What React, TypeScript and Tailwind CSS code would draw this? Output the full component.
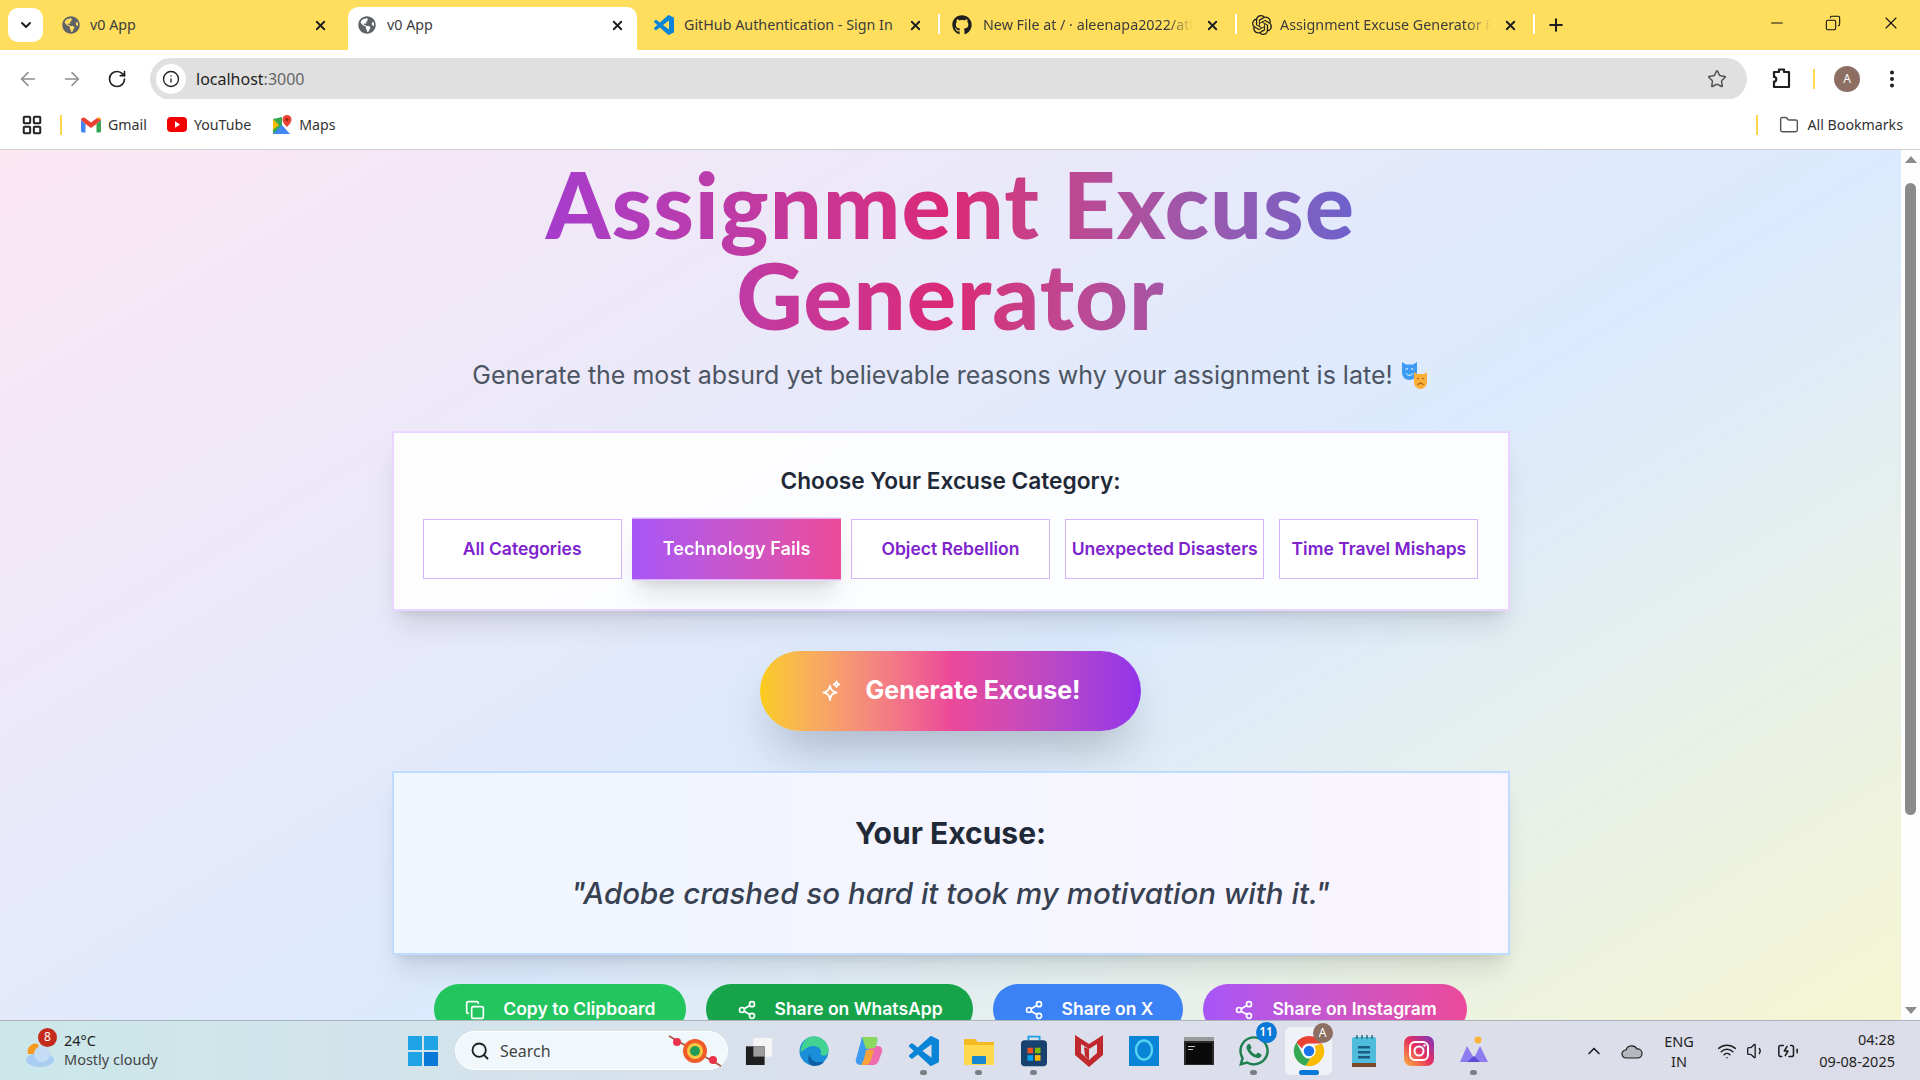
import { ReactNode } from 'react';
import clsx from 'clsx';
import {
  ArrowLeft,
  ArrowRight,
  BatteryCharging,
  ChevronDown,
  ChevronUp,
  Copy,
  EllipsisVertical,
  Folder,
  Info,
  LayoutGrid,
  Minus,
  Plus,
  RotateCw,
  Search,
  Share2,
  Star,
  Volume1,
  Wifi,
  X,
} from 'lucide-react';
import { FaGithub, FaGlobeAmericas, FaWhatsapp } from 'react-icons/fa';
import { SiOpenai } from 'react-icons/si';

const VSCODE_PATH =
  'M23.15 2.587L18.21.21a1.494 1.494 0 0 0-1.705.29l-9.46 8.63-4.12-3.128a.999.999 0 0 0-1.276.057L.327 7.261A1 1 0 0 0 .326 8.74L3.899 12 .326 15.26a1 1 0 0 0 .001 1.479L1.65 17.94a.999.999 0 0 0 1.276.057l4.12-3.128 9.46 8.63a1.492 1.492 0 0 0 1.704.29l4.942-2.377A1.5 1.5 0 0 0 24 20.06V3.939a1.5 1.5 0 0 0-.85-1.352zm-5.146 14.861L10.826 12l7.178-5.448v10.896z';

function VSCodeIcon({ className }: { className: string }) {
  return (
    <svg viewBox="0 0 24 24" className={className}>
      <path d={VSCODE_PATH} fill="#0a84d6" />
    </svg>
  );
}

function GmailIcon() {
  return (
    <svg viewBox="0 0 20 16" className="w-5 h-4">
      <path d="M0 3v11a1.5 1.5 0 0 0 1.5 1.5H4.5V7z" fill="#4285f4" />
      <path d="M20 3v11a1.5 1.5 0 0 1-1.5 1.5H15.5V7z" fill="#34a853" />
      <path d="M0 3 4.5 7l5.5 4 5.5-4L20 3c0-2.5-2.500-3.200-4-2l-6 4.500L4 1C2.500-.2 0 .5 0 3z" fill="#ea4335" />
      <path d="M15.500 1.300 20 3v-.2c0-2-2.500-3-4-1.800z" fill="#fbbc04" />
    </svg>
  );
}

function YoutubeIcon() {
  return (
    <svg viewBox="0 0 20 15" className="w-5 h-[15px]">
      <rect width="20" height="15" rx="4" fill="#f40000" />
      <path d="M8 4.200 13.200 7.500 8 10.800z" fill="#fff" />
    </svg>
  );
}

function MapsIcon() {
  return (
    <svg viewBox="0 0 20 20" className="w-5 h-5">
      <path d="M1 4 10 2v16l-9 1z" fill="#34a853" />
      <path d="M1 19 10 10l8 9z" fill="#4285f4" />
      <path d="M1 4 7 10 1 15z" fill="#fbbc04" />
      <path d="M15 0a4.500 4.500 0 0 0-4.500 4.500C10.500 8 15 12 15 12s4.500-4 4.500-7.500A4.500 4.500 0 0 0 15 0z" fill="#ea4335" />
      <circle cx="15" cy="4.500" r="1.600" fill="#a61c14" />
    </svg>
  );
}

function ChromeIcon({ className }: { className: string }) {
  return (
    <svg viewBox="0 0 32 32" className={className}>
      <path d="M16 1a15 15 0 0 1 13 7.500H16a7.500 7.500 0 0 0-7 5L3.500 7.500A15 15 0 0 1 16 1z" fill="#ea4335" />
      <path d="M3.500 7.500 9.800 20a7.500 7.500 0 0 0 7.500 3.500L13 30.800A15 15 0 0 1 3.500 7.500z" fill="#34a853" />
      <path d="M29 8.500A15 15 0 0 1 13 30.800l6.500-11A7.500 7.500 0 0 0 21.500 11z" fill="#fbbc04" />
      <circle cx="16" cy="16" r="6" fill="#1a73e8" stroke="#fff" strokeWidth="1.500" />
    </svg>
  );
}

function MasksEmoji() {
  return (
    <svg viewBox="0 0 28 28" className="w-7 h-7">
      <path d="M1 1 5 3.500h7L16 1v10c0 5-3.500 8-7.500 8S1 16 1 11z" fill="#3b9bf5" />
      <path d="M4.500 8.500 7 7.500M10 7.500l2.500 1M5 12.500c2 2.500 5 2.500 7 0" stroke="#d6ecff" strokeWidth="1.200" fill="none" />
      <path d="M13 11l3 2h7l3-2v10c0 4-3 7-6.500 7S13 25 13 21z" fill="#fbb03b" />
      <path d="M16 17.500h2M21 17.500h2M16.500 24c2-2.500 4-2.500 6 0" stroke="#a8620d" strokeWidth="1.200" fill="none" />
    </svg>
  );
}

function FourPointSparkles() {
  return (
    <svg viewBox="0 0 20 24" className="w-5 h-6" fill="none" stroke="#fff" strokeWidth="1.800" strokeLinejoin="round">
      <path d="M9 7c.8 4 2.300 5.800 6.500 6.500C11.300 14.300 9.800 16 9 21c-.8-5-2.300-6.700-6.500-7.500C6.700 12.800 8.200 11 9 7z" />
      <path d="M15.500 2.500c.3 1.700 1.100 2.500 2.800 2.800-1.700.3-2.500 1.100-2.800 2.800-.3-1.700-1.100-2.500-2.800-2.800 1.700-.3 2.500-1.100 2.800-2.800z" />
    </svg>
  );
}

type TabProps = {
  icon: ReactNode;
  title: string;
  active?: boolean;
  fade?: boolean;
  divider?: boolean;
  box: string;
  textGap: string;
};

function Tab({ icon, title, active, fade, divider, box, textGap }: TabProps) {
  return (
    <div className={clsx('relative h-[43px] flex items-center pb-[7px] shrink-0', box, active && 'bg-white rounded-t-[10px]')}>
      <span className="w-5 h-5 flex items-center justify-center shrink-0">{icon}</span>
      <span
        className={clsx(
          'flex-1 overflow-hidden whitespace-nowrap text-[14.3px] text-[#3c3c3c]',
          textGap,
          fade && '[mask-image:linear-gradient(to_right,black_88%,transparent)]'
        )}
      >
        {title}
      </span>
      <X className="w-[15px] h-[15px] ml-[12px] text-[#1f1f1f] shrink-0" strokeWidth={3} />
      {divider && <span className="absolute right-0 top-[7px] w-[2px] h-[20px] bg-white" />}
    </div>
  );
}

function TabStrip() {
  const globe = <FaGlobeAmericas className="w-[18px] h-[18px] text-[#5f6368]" />;
  return (
    <div className="h-[50px] bg-[#ffde5e] flex items-end shrink-0 relative">
      <div className="w-[35px] h-[34px] mb-2 ml-[8px] bg-white rounded-[10px] flex items-center justify-center shrink-0">
        <ChevronDown className="w-4 h-4 text-[#1f1f1f]" strokeWidth={3} />
      </div>
      <Tab icon={globe} title="v0 App" box="w-[305px] pl-[18px] pr-[20px]" textGap="ml-[9px]" />
      <Tab icon={globe} title="v0 App" box="w-[289px] pl-[9px] pr-[12px]" textGap="ml-[10px]" active />
      <Tab
        icon={<VSCodeIcon className="w-5 h-5" />}
        title="GitHub Authentication - Sign In"
        box="w-[303px] pl-[17px] pr-[17px]"
        textGap="ml-[10px]"
        divider
      />
      <Tab
        icon={<FaGithub className="w-5 h-5 text-[#1f1f1f]" />}
        title="New File at / · aleenapa2022/atl"
        box="w-[297px] pl-[12px] pr-[17px]"
        textGap="ml-[11px]"
        fade
        divider
      />
      <Tab
        icon={<SiOpenai className="w-5 h-5 text-[#1f1f1f]" />}
        title="Assignment Excuse Generator P"
        box="w-[298px] pl-[15px] pr-[17px]"
        textGap="ml-[8px]"
        fade
        divider
      />
      <div className="h-[43px] flex items-center pl-[11px] pb-[7px]">
        <Plus className="w-5 h-5 text-[#1f1f1f]" strokeWidth={2.5} />
      </div>
      <div className="flex-1" />
      <div className="h-[50px] flex items-center pr-[19px] pb-1">
        <Minus className="w-[18px] h-[18px] text-[#111]" strokeWidth={1.6} />
        <Copy className="w-[16px] h-[16px] ml-[39px] text-[#111] -scale-x-100" strokeWidth={1.6} />
        <X className="w-[20px] h-[20px] ml-[40px] text-[#111]" strokeWidth={1.3} />
      </div>
    </div>
  );
}

function ExtensionIcon() {
  return (
    <svg viewBox="0 0 22 24" className="w-[22px] h-6 ml-[24px] mt-[8px]" fill="none" stroke="#1f1f1f" strokeWidth="2.200" strokeLinejoin="round">
      <path d="M3 5h5V2.500h5V5h5v15H3v-5.500c3 .8 3-5.300 0-4.500z" />
    </svg>
  );
}

function Toolbar() {
  return (
    <div className="h-[50px] bg-white flex items-center shrink-0 rounded-t-[10px] -mb-px">
      <ArrowLeft className="w-[22px] h-[22px] ml-[17px] mt-[8px] text-[#8f8f8f]" strokeWidth={1.7} />
      <ArrowRight className="w-[22px] h-[22px] ml-[22px] mt-[8px] text-[#8f8f8f]" strokeWidth={1.7} />
      <RotateCw className="w-5 h-5 ml-[24px] mt-[8px] text-[#1f1f1f]" strokeWidth={2} />
      <div className="ml-[23px] mt-[8px] w-[1597px] h-[42px] rounded-full bg-[#e0e0e0] flex items-center pl-[6px] pr-[20px]">
        <span className="w-[30px] h-[30px] rounded-full bg-white flex items-center justify-center">
          <Info className="w-[18px] h-[18px] text-[#1f1f1f]" strokeWidth={1.8} />
        </span>
        <span className="ml-[10px] text-[16px] text-[#1f1f1f]">
          localhost<span className="text-[#666]">:3000</span>
        </span>
        <Star className="w-5 h-5 ml-auto text-[#555]" strokeWidth={1.8} />
      </div>
      <ExtensionIcon />
      <span className="w-[2px] h-[20px] bg-[#ffd84d] ml-[20px] mt-[8px]" />
      <span className="w-[26px] h-[26px] rounded-full bg-[#8d6e63] text-white text-[12px] flex items-center justify-center ml-[19px] mt-[8px]">
        A
      </span>
      <EllipsisVertical className="w-[22px] h-[22px] ml-[21px] mt-[8px] text-[#1f1f1f]" strokeWidth={2.4} />
    </div>
  );
}

function BookmarksBar() {
  return (
    <div className="h-[51px] bg-white border-b border-[#cfcfcf] flex items-center shrink-0 text-[14.2px] text-[#333] pt-[1px]">
      <LayoutGrid className="w-[22px] h-[22px] ml-[21px] text-[#222]" strokeWidth={2.2} />
      <span className="w-[2px] h-[20px] bg-[#ffd84d] ml-[17px]" />
      <span className="ml-[19px]"><GmailIcon /></span>
      <span className="ml-[7px]">Gmail</span>
      <span className="ml-[20px]"><YoutubeIcon /></span>
      <span className="ml-[7px]">YouTube</span>
      <span className="ml-[21px]"><MapsIcon /></span>
      <span className="ml-[7px]">Maps</span>
      <span className="w-[2px] h-[20px] bg-[#ffd84d] ml-auto" />
      <Folder className="w-5 h-5 ml-[21px] text-[#555]" strokeWidth={1.7} />
      <span className="ml-[9px] mr-[17px]">All Bookmarks</span>
    </div>
  );
}

const categories = ['All Categories', 'Technology Fails', 'Object Rebellion', 'Unexpected Disasters', 'Time Travel Mishaps'];

function CategoryCard() {
  return (
    <div className="mt-[40px] w-[1118px] h-[180px] border-2 border-[#e9d5ff] bg-white/90 shadow-xl px-[29px] pt-[33px]">
      <h3 className="text-center text-[22.7px] leading-[30px] font-semibold text-[#1f2937]">Choose Your Excuse Category:</h3>
      <div className="grid grid-cols-5 gap-[15px] mt-[23px]">
        {categories.map((name) =>
          name === 'Technology Fails' ? (
            <div
              key={name}
              className="h-[60px] scale-[1.05] border-y border-[#d8b4fe] bg-gradient-to-r from-[#a855f7] to-[#ec4899] shadow-xl flex items-center justify-center text-[17.3px] font-semibold text-white whitespace-nowrap"
            >
              {name}
            </div>
          ) : (
            <div
              key={name}
              className="h-[60px] border border-[#d8b4fe] bg-white flex items-center justify-center text-[17.5px] font-semibold text-[#7e22ce] whitespace-nowrap"
            >
              {name}
            </div>
          )
        )}
      </div>
    </div>
  );
}

type ActionProps = { label: string; className: string; copy?: boolean };

function ActionButton({ label, className, copy }: ActionProps) {
  const Icon = copy ? Copy : Share2;
  return (
    <div className={clsx('h-[50px] rounded-full pl-[31px] pr-[30px] pt-[1px] flex items-center gap-[18px] text-white text-[17.5px] font-semibold whitespace-nowrap', className)}>
      <Icon className="w-5 h-5" strokeWidth={2} />
      {label}
    </div>
  );
}

function Page() {
  return (
    <div className="flex-1 overflow-hidden">
      <div className="min-h-[1146px] bg-gradient-to-br from-pink-100 via-blue-100 to-yellow-100 flex flex-col items-center">
        <h1
          className="w-[1118px] mt-[8px] text-center text-[92px] leading-[91px] font-black tracking-[1px] bg-gradient-to-r from-[#9333ea] via-[#db2777] to-[#2563eb] bg-clip-text text-transparent"
          style={{ fontFamily: 'Lato, sans-serif' }}
        >
          Assignment Excuse Generator
        </h1>
        <div className="mt-[19px] flex items-center gap-[8px] text-[25px] leading-8 text-[#4b5563]">
          Generate the most absurd yet believable reasons why your assignment is late!
          <MasksEmoji />
        </div>
        <CategoryCard />
        <div className="mt-[40px] w-[381px] h-[80px] rounded-full bg-gradient-to-r from-[#facc15] via-[#ec4899] to-[#9333ea] shadow-2xl flex items-center justify-center gap-[25px] text-white text-[25px] font-bold">
          <FourPointSparkles />
          Generate Excuse!
        </div>
        <div className="mt-[40px] w-[1118px] h-[184px] border-2 border-[#bfdbfe] bg-gradient-to-r from-[#eff6ff] to-[#faf5ff] shadow-xl flex flex-col items-center pt-[42px]">
          <h3 className="text-[30px] leading-9 font-bold text-[#1f2937]">Your Excuse:</h3>
          <p className="mt-[24px] text-[29.5px] leading-9 italic font-medium text-[#374151]">
            "Adobe crashed so hard it took my motivation with it."
          </p>
        </div>
        <div className="mt-[29px] flex gap-[20px]">
          <ActionButton label="Copy to Clipboard" className="bg-[#22c55e]" copy />
          <ActionButton label="Share on WhatsApp" className="bg-[#16a34a]" />
          <ActionButton label="Share on X" className="bg-[#3b82f6]" />
          <ActionButton label="Share on Instagram" className="bg-gradient-to-r from-[#a855f7] to-[#ec4899]" />
        </div>
      </div>
    </div>
  );
}

function Scrollbar() {
  return (
    <div className="w-[19px] bg-[#fdfdfd] flex flex-col items-center shrink-0">
      <svg viewBox="0 0 12 7" className="w-3 h-[7px] mt-[6px]"><path d="M6 0 12 7H0z" fill="#8b8b8b" /></svg>
      <div className="w-[11px] h-[632px] mt-[20px] rounded-full bg-[#8b8b8b]" />
      <div className="flex-1" />
      <svg viewBox="0 0 12 7" className="w-3 h-[7px] mb-[6px]"><path d="M6 7 12 0H0z" fill="#8b8b8b" /></svg>
    </div>
  );
}

type SlotProps = { children: ReactNode; dot?: boolean; active?: boolean };

function Slot({ children, dot, active }: SlotProps) {
  return (
    <div className="relative w-[55px] h-[60px] flex items-center justify-center shrink-0">
      {active && <span className="absolute left-[4px] right-[4px] top-[6px] bottom-[6px] rounded-md bg-white/60" />}
      <span className="relative flex items-center justify-center">{children}</span>
      {dot && <span className="absolute bottom-[6px] w-[7px] h-[5px] rounded-full bg-[#7a7f85]" />}
      {active && <span className="absolute bottom-[6px] w-[20px] h-[5px] rounded-full bg-[#0a78d7]" />}
    </div>
  );
}

function Badge({ text, className }: { text: string; className: string }) {
  return (
    <span className={clsx('absolute rounded-full text-white text-[12px] flex items-center justify-center', className)}>{text}</span>
  );
}

function Taskbar() {
  return (
    <div className="h-[60px] border-t border-[#aeb6bd] bg-gradient-to-r from-[#cbe7ea] via-[#dcdfec] to-[#dcdde9] flex items-center shrink-0">
      {/* Weather */}
      <div className="w-[395px] flex items-center pl-[25px] shrink-0">
        <span className="relative w-[34px] h-[34px] shrink-0">
          <svg viewBox="0 0 34 34" className="w-[34px] h-[34px]">
            <path d="M3 20a8 8 0 0 1 10-10l3 10z" fill="#f39a1f" />
            <ellipse cx="15" cy="26" rx="14" ry="7" fill="#a9cdf2" />
            <circle cx="17" cy="20" r="8" fill="#c4dcf5" />
          </svg>
          <Badge text="8" className="top-[-6px] left-[13px] w-[19px] h-[19px] bg-[#c42b1c]" />
        </span>
        <span className="ml-[5px] flex flex-col text-[14.5px] leading-[19px] -mt-[2px]">
          <span className="text-[#1f1f1f]">24°C</span>
          <span className="text-[#444]">Mostly cloudy</span>
        </span>
      </div>

      <Slot>
        <svg viewBox="0 0 30 30" className="w-[30px] h-[30px]">
          <path d="M0 0h14v14H0zM16 0h14v14H16zM0 16h14v14H0zM16 16h14v14H16z" fill="#1ea3e6" />
          <path d="M16 16h14v14H16z" fill="#0a78d7" />
        </svg>
      </Slot>

      {/* Search */}
      <div className="w-[273px] h-[39px] ml-[5px] mr-[3px] rounded-full bg-[#f1f8fb] border border-white flex items-center pl-[14px] shrink-0">
        <Search className="w-[20px] h-[20px] text-[#1f1f1f]" strokeWidth={2.2} />
        <span className="ml-[10px] text-[16px] text-[#444]">Search</span>
        <svg viewBox="0 0 56 34" className="w-[56px] h-[34px] ml-auto mr-[4px]">
          <path d="M2 2 54 32" stroke="#a7503a" strokeWidth="1.500" />
          <circle cx="10" cy="8" r="4" fill="#e8334a" />
          <circle cx="46" cy="26" r="4" fill="#e8334a" />
          <circle cx="28" cy="17" r="12" fill="#f15a29" />
          <circle cx="28" cy="17" r="8" fill="#f7c744" />
          <circle cx="28" cy="17" r="5" fill="#1f9d55" />
        </svg>
      </div>

      <div className="flex items-center">
        <Slot>
          <svg viewBox="0 0 30 30" className="w-[28px] h-[30px]">
            <rect x="9" y="1" width="20" height="20" fill="#f5f5f5" />
            <rect x="1" y="10" width="20" height="20" fill="#1f1f1f" />
            <rect x="9" y="10" width="12" height="11" fill="#9c9c9c" />
          </svg>
        </Slot>
        <Slot>
          <svg viewBox="0 0 30 30" className="w-[30px] h-[30px]">
            <circle cx="15" cy="15" r="14.500" fill="#1a8ed8" />
            <path d="M15 .5a14.500 14.500 0 0 1 14.500 14.500c0 5-6 6-8 3 2-4-2-8-7-8-6 0-11 5-13 6C2 8 7 .5 15 .5z" fill="#42d392" />
            <path d="M11 18c0 5 4 9 10 8l4 0c-3 3-6 4-10 4-5 0-8-6-4-12z" fill="#0d5fa8" />
          </svg>
        </Slot>
        <Slot>
          <svg viewBox="0 0 30 30" className="w-[30px] h-[30px]">
            <path d="M8 1h12c3 0 4 2 3 5l-6 18c-1 3-3 5-6 5H7c-4 0-6-3-5-6L7 5c.3-2 .5-4 1-4z" fill="#3d9bf0" />
            <path d="M14 10h10c3 0 5 3 4 6l-3 8c-1 3-3 5-6 5H9c3 0 5-2 6-5z" fill="#ee6bb0" />
            <path d="M8 1h12c3 0 4 2 3 5l-2 6-9 1z" fill="#8ad85e" />
            <path d="M12 14h8l-3 10c-1 3-3 5-6 5H7l3-6z" fill="#f6a33b" />
          </svg>
        </Slot>
        <Slot dot><VSCodeIcon className="w-[30px] h-[30px]" /></Slot>
        <Slot dot>
          <svg viewBox="0 0 30 28" className="w-[32px] h-[28px]">
            <path d="M0 2h11l3 3h16v23H0z" fill="#f5b921" />
            <path d="M0 8h30v20H0z" fill="#ffd84d" />
            <rect x="8" y="19" width="14" height="8" rx="1" fill="#1787d4" />
          </svg>
        </Slot>
        <Slot dot>
          <svg viewBox="0 0 28 34" className="w-[26px] h-[33px]">
            <path d="M8 6V2h12v4" stroke="#1ba1e2" strokeWidth="2" fill="none" />
            <rect y="6" width="28" height="28" rx="4" fill="#17426f" />
            <path d="M7 14h6v6H7z" fill="#f25022" />
            <path d="M15 14h6v6h-6z" fill="#7fba00" />
            <path d="M7 22h6v6H7z" fill="#00a4ef" />
            <path d="M15 22h6v6h-6z" fill="#ffb900" />
          </svg>
        </Slot>
        <Slot>
          <svg viewBox="0 0 28 32" className="w-[28px] h-[32px]">
            <path d="M0 0l14 9L28 0v20L14 32 0 20z" fill="#c0282d" />
            <path d="M6 9l8 5 8-5v9l-8 7-8-7z" fill="#dcdfe8" />
            <path d="M14 14v11l-4-4-1-9z" fill="#c0282d" />
          </svg>
        </Slot>
        <Slot>
          <svg viewBox="0 0 30 30" className="w-[30px] h-[30px]">
            <rect width="30" height="30" fill="#0a84d6" />
            <ellipse cx="15" cy="14" rx="8" ry="9.500" fill="none" stroke="#57d2f5" strokeWidth="2.500" />
          </svg>
        </Slot>
        <Slot>
          <svg viewBox="0 0 30 28" className="w-[30px] h-[28px]">
            <rect width="30" height="28" fill="#2b2b2b" />
            <rect width="30" height="4" fill="#9a9a9a" />
            <rect x="2" y="6" width="26" height="21" fill="#0a0a0a" />
            <path d="M4 9h7v1H4zM4 12h5v1H4z" fill="#c8c8c8" />
          </svg>
        </Slot>
        <Slot dot>
          <FaWhatsapp className="w-[34px] h-[34px] text-[#1e7f50]" />
          <Badge text="11" className="top-[-12px] right-[-6px] w-[21px] h-[21px] bg-[#0a78d7] font-semibold" />
        </Slot>
        <Slot active>
          <ChromeIcon className="w-[32px] h-[32px]" />
          <Badge text="A" className="top-[-12px] right-[-8px] w-[20px] h-[20px] bg-[#8d6e63]" />
        </Slot>
        <Slot>
          <svg viewBox="0 0 24 32" className="w-[24px] h-[32px]">
            <rect y="2" width="24" height="28" rx="2" fill="#4fbcdc" />
            <rect y="28" width="24" height="4" fill="#7a4a2b" />
            <path d="M5 0v4M10 0v4M15 0v4M20 0v4" stroke="#2a6d87" strokeWidth="1.500" />
            <path d="M6 11h12v2.500H6zM6 16h12v2.500H6zM6 21h12v2.500H6z" fill="#1a5c82" />
          </svg>
        </Slot>
        <Slot>
          <svg viewBox="0 0 30 30" className="w-[30px] h-[30px]">
            <defs>
              <linearGradient id="insta" x1="0" y1="1" x2="1" y2="0">
                <stop offset="0" stopColor="#fdb43a" />
                <stop offset="0.5" stopColor="#e7305f" />
                <stop offset="1" stopColor="#7a35c2" />
              </linearGradient>
            </defs>
            <rect width="30" height="30" rx="7" fill="url(#insta)" />
            <rect x="6" y="6" width="18" height="18" rx="5" fill="none" stroke="#fff" strokeWidth="2" />
            <circle cx="15" cy="15" r="4.500" fill="none" stroke="#fff" strokeWidth="2" />
            <circle cx="20.500" cy="9.500" r="1.200" fill="#fff" />
          </svg>
        </Slot>
        <Slot dot>
          <svg viewBox="0 0 30 30" className="w-[30px] h-[30px]">
            <circle cx="19" cy="4" r="3.500" fill="#fdb43a" />
            <path d="M1 26 8 10l7 12 6-12 8 16z" fill="#8f7bf0" />
            <path d="M8 26l7-6 6 6z" fill="#5b4bd6" />
          </svg>
        </Slot>
      </div>

      {/* Tray */}
      <ChevronUp className="w-[20px] h-[20px] ml-[83px] text-[#1f1f1f]" strokeWidth={2} />
      <svg viewBox="0 0 22 16" className="w-[22px] h-[18px] ml-[17px]">
        <path d="M5 15a4 4 0 0 1 0-8 6 6 0 0 1 11-1 4.500 4.500 0 0 1 1 9z" fill="#b4b8bc" stroke="#1f1f1f" strokeWidth="1.200" />
      </svg>
      <div className="ml-[18px] w-[36px] flex flex-col items-center text-[14.5px] leading-[20px] text-[#1f1f1f]">
        <span>ENG</span>
        <span>IN</span>
      </div>
      <Wifi className="w-[20px] h-[20px] ml-[20px] text-[#1f1f1f]" strokeWidth={1.8} />
      <Volume1 className="w-[20px] h-[20px] ml-[9px] text-[#1f1f1f]" strokeWidth={1.6} />
      <BatteryCharging className="w-[22px] h-[22px] ml-[11px] text-[#1f1f1f]" strokeWidth={1.7} />
      <div className="ml-auto pr-[25px] flex flex-col items-end text-[14.5px] leading-[22px] text-[#1f1f1f] -mt-[2px]">
        <span>04:28</span>
        <span>09-08-2025</span>
      </div>
    </div>
  );
}

export default function App() {
  return (
    <div className="h-screen w-full flex flex-col overflow-hidden bg-white" style={{ fontFamily: 'Inter, sans-serif' }}>
      <div className="flex flex-col shrink-0" style={{ fontFamily: '"Noto Sans", sans-serif' }}>
        <TabStrip />
        <Toolbar />
        <BookmarksBar />
      </div>
      <div className="flex-1 min-h-0 flex">
        <Page />
        <Scrollbar />
      </div>
      <div style={{ fontFamily: '"Noto Sans", sans-serif' }}>
        <Taskbar />
      </div>
    </div>
  );
}
